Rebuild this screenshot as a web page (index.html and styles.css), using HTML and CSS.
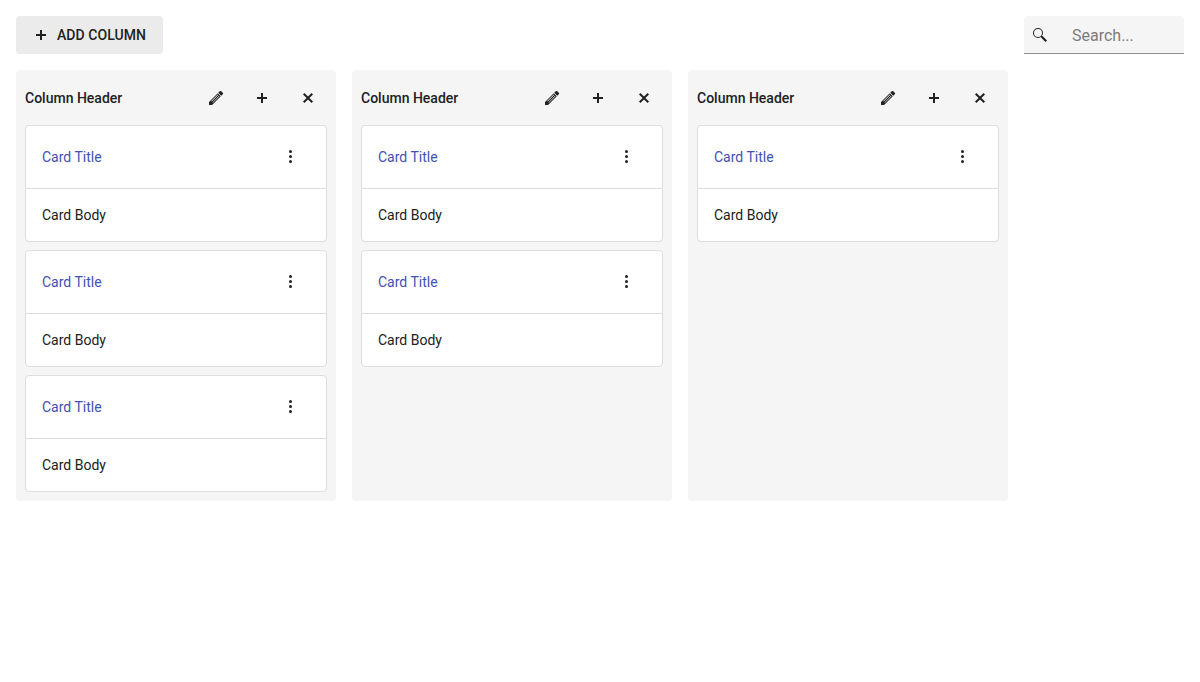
FILE: index.html
```
<!DOCTYPE html>
<html lang="en">
<head>
<meta charset="utf-8">
<title>Task Board</title>
<link rel="stylesheet" href="styles.css">
</head>
<body>
<svg class="sprite" aria-hidden="true">
  <symbol id="plus" viewBox="0 0 16 16"><path d="M7 3h2v4h4v2H9v4H7V9H3V7h4z"/></symbol>
  <symbol id="close" viewBox="0 0 16 16"><path d="M4.4 3 8 6.6 11.6 3 13 4.4 9.4 8 13 11.6 11.6 13 8 9.4 4.4 13 3 11.6 6.6 8 3 4.4z"/></symbol>
  <symbol id="pencil" viewBox="0 0 16 16"><path fill-rule="evenodd" d="M11.3 1.7 12 1Q12.5.8 13 1L15 3Q15.2 3.5 15 4L14.3 4.7 13.3 5.7 10.3 2.7zM9.8 3.2 12.8 6.2 4.5 14.5 4 15H1V12L1.5 11.5zM9.8 4.5 3.2 11.1 3.7 11.6 10.3 5zM11.1 5.8 4.5 12.4 4.9 12.8 11.5 6.2z"/></symbol>
  <symbol id="more" viewBox="0 0 16 16"><circle cx="8.5" cy="2.5" r="1.5"/><circle cx="8.5" cy="7.5" r="1.5"/><circle cx="8.5" cy="12.5" r="1.5"/></symbol>
  <symbol id="search" viewBox="0 0 16 16"><path fill-rule="evenodd" d="M6 1a5 5 0 1 0 0 10 5 5 0 0 0 0-10zM6 2a4 4 0 1 1 0 8 4 4 0 0 1 0-8z"/><path d="M8.8 9.5 9.5 8.8 10.8 9.3 15 13.5 13.5 15 9.3 10.8z"/></symbol>
</svg>
<div class="taskboard">
  <header class="toolbar">
    <button class="add-button"><svg class="icon"><use href="#plus"/></svg><span>ADD COLUMN</span></button>
    <label class="search"><svg class="icon"><use href="#search"/></svg><input class="search-input" type="text" placeholder="Search..."></label>
  </header>
  <main class="columns">
    <section class="column">
      <div class="column-header"><span class="column-title">Column Header</span><svg class="icon"><use href="#pencil"/></svg><svg class="icon"><use href="#plus"/></svg><svg class="icon"><use href="#close"/></svg></div>
      <div class="cards">
        <article class="card"><div class="card-header"><a class="card-title">Card Title</a><svg class="icon"><use href="#more"/></svg></div><div class="card-body">Card Body</div></article>
        <article class="card"><div class="card-header"><a class="card-title">Card Title</a><svg class="icon"><use href="#more"/></svg></div><div class="card-body">Card Body</div></article>
        <article class="card"><div class="card-header"><a class="card-title">Card Title</a><svg class="icon"><use href="#more"/></svg></div><div class="card-body">Card Body</div></article>
      </div>
    </section>
    <section class="column">
      <div class="column-header"><span class="column-title">Column Header</span><svg class="icon"><use href="#pencil"/></svg><svg class="icon"><use href="#plus"/></svg><svg class="icon"><use href="#close"/></svg></div>
      <div class="cards">
        <article class="card"><div class="card-header"><a class="card-title">Card Title</a><svg class="icon"><use href="#more"/></svg></div><div class="card-body">Card Body</div></article>
        <article class="card"><div class="card-header"><a class="card-title">Card Title</a><svg class="icon"><use href="#more"/></svg></div><div class="card-body">Card Body</div></article>
      </div>
    </section>
    <section class="column">
      <div class="column-header"><span class="column-title">Column Header</span><svg class="icon"><use href="#pencil"/></svg><svg class="icon"><use href="#plus"/></svg><svg class="icon"><use href="#close"/></svg></div>
      <div class="cards">
        <article class="card"><div class="card-header"><a class="card-title">Card Title</a><svg class="icon"><use href="#more"/></svg></div><div class="card-body">Card Body</div></article>
      </div>
    </section>
  </main>
</div>
</body>
</html>
```
FILE: styles.css
```
* { box-sizing: border-box; }
body {
  margin: 0;
  background: #fff;
  color: #212121;
  font: 14px/20px Roboto, sans-serif;
}
.sprite { display: none; }
.icon {
  flex: none;
  width: 16px;
  height: 16px;
  fill: currentColor;
}
.taskboard {
  display: flex;
  flex-direction: column;
  gap: 16px;
  padding: 16px;
}
.toolbar {
  display: flex;
  justify-content: space-between;
  height: 38px;
}
.add-button {
  display: flex;
  align-items: center;
  gap: 8px;
  width: 147px;
  padding: 0 0 0 17px;
  border: 0;
  border-radius: 4px;
  background: #ebebeb;
  color: inherit;
  font: 500 14px/20px Roboto, sans-serif;
  letter-spacing: 0.05px;
  white-space: nowrap;
}
.search {
  display: flex;
  align-items: center;
  gap: 24px;
  width: 160px;
  padding-left: 8px;
  border-bottom: 1px solid #8f8f8f;
  border-radius: 4px 4px 0 0;
  background: #f5f5f5;
}
.search-input {
  flex: 1;
  min-width: 0;
  padding: 2px 0 0;
  border: 0;
  outline: 0;
  background: transparent;
  font: 16px/24px Roboto, sans-serif;
}
.search-input::placeholder { color: #7c7c7c; }
.columns {
  display: flex;
  gap: 16px;
}
.column {
  width: 320px;
  padding: 0 9px 9px;
  border-radius: 4px;
  background: #f5f5f5;
}
.column-header {
  display: flex;
  align-items: center;
  gap: 30px;
  height: 55px;
  padding-right: 11px;
}
.column-title {
  flex: 1;
  font-weight: 500;
}
.cards {
  display: flex;
  flex-direction: column;
  gap: 8px;
}
.card {
  border: 1px solid #dedede;
  border-radius: 4px;
  background: #fff;
}
.card-header {
  display: flex;
  align-items: center;
  justify-content: space-between;
  height: 63px;
  padding: 0 28px 0 16px;
  border-bottom: 1px solid #dedede;
}
.card-title { color: #3f51b5; }
.card-body { padding: 16px; }
```
